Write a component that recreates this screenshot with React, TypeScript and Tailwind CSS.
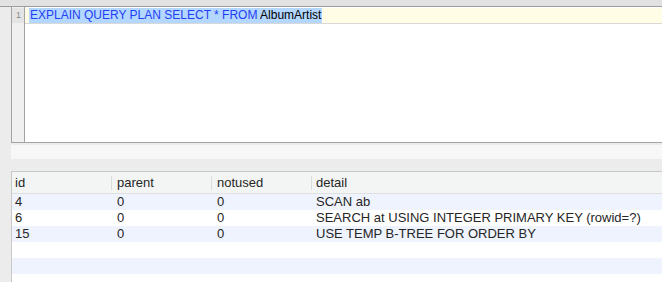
import React from "react";

const rows = [
  { id: "4", parent: "0", notused: "0", detail: "SCAN ab" },
  { id: "6", parent: "0", notused: "0", detail: "SEARCH at USING INTEGER PRIMARY KEY (rowid=?)" },
  { id: "15", parent: "0", notused: "0", detail: "USE TEMP B-TREE FOR ORDER BY" },
  null,
  null,
  null,
];

const font = { fontFamily: '"Liberation Sans", Arial, sans-serif' };

export default function App() {
  return (
    <div className="w-[662px] h-[282px] bg-[#ececec] overflow-hidden" style={font}>
      <div className="h-[6px] bg-[#e2e2e2] border-b border-[#9c9c9c] box-content" />
      <div className="pl-[11px]">
        {/* editor */}
        <div className="h-[135px] bg-white border-l border-b border-[#a3a3a3] box-content flex">
          <div className="w-[13px] bg-[#f0f0f0] border-r border-[#a3a3a3] flex flex-col">
            <div className="mt-[1px] h-[15px] bg-[#e4e4e4] text-[9px] text-[#8a8a8a] leading-[15px] text-center pl-[1px]">1</div>
          </div>
          <div className="flex-1 flex flex-col">
            <div className="mt-[1px] h-[15px] bg-[#fffde6] border-b border-[#d8d8d8] box-content flex items-center pl-[4px]">
              <span className="bg-[#b3d7ff] text-[12px] leading-[15px] px-[1px]">
                <span className="text-[#1f3ef5]">EXPLAIN QUERY PLAN SELECT * FROM </span>
                <span className="text-black">AlbumArtist</span>
              </span>
            </div>
          </div>
        </div>
        {/* status strip */}
        <div className="mt-[2px] h-[14px] bg-[#f7f7f7]" />
        {/* results table */}
        <div className="mt-[12px] bg-white border-t border-l border-[#c8c8c8] text-[13px] text-[#262626]">
          <div className="h-[22px] bg-[#f3f4f4] border-b border-[#e0e0e0] flex items-center">
            <div className="w-[100px] pl-[3px] border-r border-[#dcdcdc] h-[14px] flex items-center">id</div>
            <div className="w-[100px] pl-[5px] border-r border-[#dcdcdc] h-[14px] flex items-center">parent</div>
            <div className="w-[100px] pl-[5px] border-r border-[#dcdcdc] h-[14px] flex items-center">notused</div>
            <div className="flex-1 pl-[4px] h-[14px] flex items-center">detail</div>
          </div>
          {rows.map((r, i) => (
            <div
              key={i}
              className={`h-[16px] flex items-center leading-[16px] ${i % 2 === 0 ? "bg-[#eef3fd]" : "bg-white"}`}
            >
              {r && (
                <>
                  <div className="w-[100px] pl-[3px]">{r.id}</div>
                  <div className="w-[100px] pl-[5px]">{r.parent}</div>
                  <div className="w-[100px] pl-[5px]">{r.notused}</div>
                  <div className="flex-1 pl-[4px]">{r.detail}</div>
                </>
              )}
            </div>
          ))}
        </div>
      </div>
    </div>
  );
}
